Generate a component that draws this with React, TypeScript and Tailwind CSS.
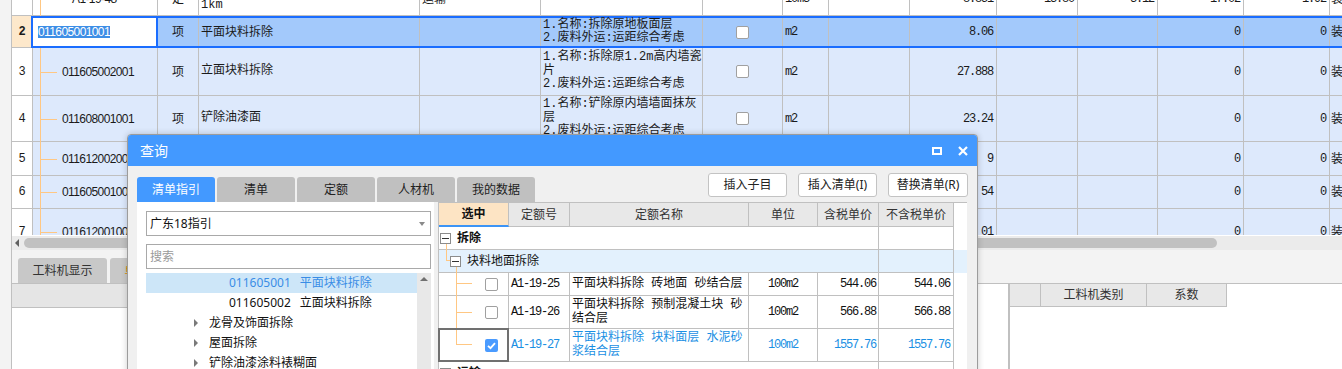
import type { ReactNode } from 'react';

const MONO = "font-['Liberation_Mono','Noto_Sans_CJK_SC',monospace]";
const UI = "font-['Noto_Sans','Noto_Sans_CJK_SC',sans-serif]";
const ARIAL = "font-['Liberation_Sans','Noto_Sans_CJK_SC',sans-serif]";
const LINE = 'bg-[#ffc783]';

// main grid column widths, each includes its right border
const W = [
  'w-[21px]', 'w-[125px]', 'w-[41px]', 'w-[221px]', 'w-[121px]', 'w-[162px]', 'w-[80px]',
  'w-[46px]', 'w-[81px]', 'w-[87px]', 'w-[81px]', 'w-[80px]', 'w-[86px]', 'w-[86px]', 'w-[100px]',
];

type Row = {
  no: string;
  code: string;
  indent: string;
  type: string;
  name: string[];
  c5?: string;
  feat: string[];
  check?: boolean;
  unit: string;
  qty: string;
  c11?: string;
  c12?: string;
  c13: string;
  c14: string;
  h: string;
  white?: boolean;
  branch?: boolean;
};

const rows: Row[] = [
  {
    no: '', code: 'A1-19-48', indent: 'pl-[39px]', type: '定', name: ['余泥渣土运输 运距', '1km'], c5: '运输',
    feat: [], unit: '10m3', qty: '8.851', c11: '13.80', c12: '3.12', c13: '17.02', c14: '1.92', h: 'h-[34px]', white: true,
  },
  {
    no: '3', code: '011605002001', indent: 'pl-[29px]', type: '项', name: ['立面块料拆除'], branch: true, check: true,
    feat: ['1.名称:拆除原1.2m高内墙瓷', '片', '2.废料外运:运距综合考虑'], unit: 'm2', qty: '27.888', c13: '0', c14: '0', h: 'h-[48px]',
  },
  {
    no: '4', code: '011608001001', indent: 'pl-[29px]', type: '项', name: ['铲除油漆面'], branch: true, check: true,
    feat: ['1.名称:铲除原内墙墙面抹灰', '层', '2.废料外运:运距综合考虑'], unit: 'm2', qty: '23.24', c13: '0', c14: '0', h: 'h-[46px]',
  },
  {
    no: '5', code: '011612002001', indent: 'pl-[29px]', type: '项', name: ['天棚面龙骨及饰面拆除'], branch: true, check: true,
    feat: ['1.名称:拆除原天棚', '2.废料外运:运距综合考虑'], unit: 'm2', qty: '9', c13: '0', c14: '0', h: 'h-[34px]',
  },
  {
    no: '6', code: '011605001002', indent: 'pl-[29px]', type: '项', name: ['平面块料拆除'], branch: true, check: true,
    feat: ['1.名称:拆除原踢脚线', '2.废料外运:运距综合考虑'], unit: 'm2', qty: '54', c13: '0', c14: '0', h: 'h-[33px]',
  },
  {
    no: '7', code: '011612001001', indent: 'pl-[29px]', type: '项', name: ['抹灰层拆除'], branch: true, check: true,
    feat: ['1.名称:铲除原天棚抹灰', '层', '2.废料外运:运距综合考虑'], unit: 'm2', qty: '01', c13: '0', c14: '0', h: 'h-[46px]',
  },
];

function Cell({ w, bottom = true, className = '', children }: { w: string; bottom?: boolean; className?: string; children?: ReactNode }) {
  return (
    <div className={`${w} h-full shrink-0 flex whitespace-nowrap border-r border-[#c0c0c0] ${bottom ? 'border-b' : ''} ${className}`}>
      {children}
    </div>
  );
}

function Box({ checked = false }: { checked?: boolean }) {
  if (checked) {
    return (
      <span className="w-[13px] h-[13px] shrink-0 rounded-[2px] bg-[#4a9bff] flex items-center justify-center">
        <svg width="11" height="11" viewBox="0 0 11 11">
          <path d="M2 5.8L4.5 8.2L9 3.2" fill="none" stroke="white" strokeWidth="1.8" />
        </svg>
      </span>
    );
  }
  return <span className="w-[13px] h-[13px] shrink-0 rounded-[2px] bg-white border border-[#a0a0a0]" />;
}

function GridRow({ r }: { r: Row }) {
  const bg = r.white ? 'bg-white' : 'bg-[#dde9fc]';
  const num = `items-center justify-end pr-[3px] ${MONO} text-[12px] tracking-[-1.2px] ${bg}`;
  return (
    <div className={`flex w-max ${r.h}`}>
      <Cell w={W[0]} className={`items-center justify-center bg-white ${MONO} text-[12px]`}>{r.no}</Cell>
      <Cell w={W[1]} className={`relative items-center ${bg}`}>
        <span className={`absolute left-[7px] top-0 bottom-[-1px] w-px ${LINE}`} />
        {r.branch && <span className={`absolute left-[8px] top-1/2 w-[16px] h-px ${LINE}`} />}
        <span className={`${r.indent} ${ARIAL} text-[12px] tracking-[-0.6px]`}>{r.code}</span>
      </Cell>
      <Cell w={W[2]} className={`items-center justify-center text-[12px] ${bg}`}>{r.type}</Cell>
      <Cell w={W[3]} className={`flex-col justify-center pl-[2px] text-[12px] leading-[13.5px] ${MONO} ${bg}`}>
        {r.name.map((l) => <div key={l}>{l}</div>)}
      </Cell>
      <Cell w={W[4]} className={`items-center pl-[2px] text-[12px] ${bg}`}>{r.c5}</Cell>
      <Cell w={W[5]} className={`flex-col justify-center pl-[2px] text-[12px] leading-[13.5px] ${MONO} ${bg}`}>
        {r.feat.map((l) => <div key={l}>{l}</div>)}
      </Cell>
      <Cell w={W[6]} className={`items-center justify-center ${bg}`}>{r.check && <Box />}</Cell>
      <Cell w={W[7]} className={`items-center pl-[2px] ${MONO} text-[12px] tracking-[-1.2px] ${bg}`}>{r.unit}</Cell>
      <Cell w={W[8]} className={bg} />
      <Cell w={W[9]} className={num}>{r.qty}</Cell>
      <Cell w={W[10]} className={num}>{r.c11}</Cell>
      <Cell w={W[11]} className={num}>{r.c12}</Cell>
      <Cell w={W[12]} className={num}>{r.c13}</Cell>
      <Cell w={W[13]} className={num}>{r.c14}</Cell>
      <Cell w={W[14]} className={`items-center pl-[1px] overflow-hidden text-[12px] ${bg}`}>装饰工程</Cell>
    </div>
  );
}

function SelectedRow() {
  const num = `items-center justify-end pr-[3px] ${MONO} text-[12px] tracking-[-1.2px]`;
  return (
    <div className="flex w-max h-[32px]">
      <Cell w={W[0]} className={`items-center justify-center bg-[#fde8cb] font-bold ${MONO} text-[12px]`}>2</Cell>
      <div className="-ml-[2px] flex h-full border-y-2 border-[#1a6dff] bg-[#a3c9fb]">
        <div className="w-[127px] h-full shrink-0 bg-white border-x-2 border-[#1a6dff] pl-[5px]">
          <span className={`inline-block h-[12px] leading-[12px] bg-[#3d8ee6] text-white ${ARIAL} text-[12px] tracking-[-0.6px]`}>011605001001</span>
        </div>
        <Cell w={W[2]} bottom={false} className="items-center justify-center text-[12px]">项</Cell>
        <Cell w={W[3]} bottom={false} className="items-center pl-[2px] text-[12px]">平面块料拆除</Cell>
        <Cell w={W[4]} bottom={false} />
        <Cell w={W[5]} bottom={false} className={`flex-col justify-center pl-[2px] text-[12px] leading-[13.5px] ${MONO}`}>
          <div>1.名称:拆除原地板面层</div>
          <div>2.废料外运:运距综合考虑</div>
        </Cell>
        <Cell w={W[6]} bottom={false} className="items-center justify-center"><Box /></Cell>
        <Cell w={W[7]} bottom={false} className={`items-center pl-[2px] ${MONO} text-[12px] tracking-[-1.2px]`}>m2</Cell>
        <Cell w={W[8]} bottom={false} />
        <Cell w={W[9]} bottom={false} className={num}>8.06</Cell>
        <Cell w={W[10]} bottom={false} />
        <Cell w={W[11]} bottom={false} />
        <Cell w={W[12]} bottom={false} className={num}>0</Cell>
        <Cell w={W[13]} bottom={false} className={num}>0</Cell>
        <Cell w={W[14]} bottom={false} className="items-center pl-[1px] overflow-hidden text-[12px]">装饰工程</Cell>
      </div>
    </div>
  );
}

function Minus({ className = '' }: { className?: string }) {
  return (
    <span className={`relative z-10 w-[11px] h-[11px] shrink-0 border border-[#8c8c8c] bg-white flex items-center justify-center ${className}`}>
      <span className="w-[7px] h-px bg-[#333]" />
    </span>
  );
}

const TW = ['w-[70px]', 'w-[61px]', 'w-[179px]', 'w-[69px]', 'w-[61px]', 'w-[75px]'];
const cellB = 'h-full shrink-0 flex border-r border-b border-[#c0c0c0] whitespace-nowrap';

const quotas = [
  { code: 'A1-19-25', name: ['平面块料拆除 砖地面 砂结合层'], price: '544.06', h: 'h-[23px]', line: 'top-[10px]', last: false, sel: false },
  { code: 'A1-19-26', name: ['平面块料拆除 预制混凝土块 砂', '结合层'], price: '566.88', h: 'h-[33px]', line: 'top-[16px]', last: false, sel: false },
  { code: 'A1-19-27', name: ['平面块料拆除 块料面层 水泥砂', '浆结合层'], price: '1557.76', h: 'h-[33px]', line: 'top-[15px]', last: true, sel: true },
];

function QuotaTable() {
  const mono = `${MONO} tracking-[-1.2px]`;
  return (
    <div className="w-[529px] shrink-0 bg-white border-l border-t border-[#c0c0c0] text-[12px] text-[#111]">
      <div className="flex h-[24px]">
        <div className={`${TW[0]} h-full shrink-0 flex items-center justify-center border-r border-[#c0c0c0] border-b-2 border-b-[#3d94f5] bg-[#fde4c4] font-bold`}>选中</div>
        {['定额号', '定额名称', '单位', '含税单价', '不含税单价'].map((t, i) => (
          <div key={t} className={`${TW[i + 1]} ${cellB} items-center justify-center bg-[#e8e8e8] text-[#333]`}>{t}</div>
        ))}
      </div>

      <div className="flex h-[23px]">
        <div className={`w-[440px] ${cellB} relative items-center`}>
          <span className={`absolute left-[7px] top-[16px] bottom-[-1px] w-px ${LINE}`} />
          <Minus className="ml-[1px]" />
          <span className="ml-[6px] font-bold">拆除</span>
        </div>
        <div className={`${TW[5]} ${cellB}`} />
      </div>

      <div className="flex h-[23px] bg-[#e3f1fd]">
        <div className={`w-[440px] ${cellB} relative items-center`}>
          <span className={`absolute left-[7px] top-[-1px] h-[11px] w-px ${LINE}`} />
          <span className={`absolute left-[7px] top-[10px] w-[4px] h-px ${LINE}`} />
          <span className={`absolute left-[17px] top-[16px] bottom-[-1px] w-px ${LINE}`} />
          <Minus className="ml-[11px]" />
          <span className="ml-[6px]">块料地面拆除</span>
        </div>
        <div className={`${TW[5]} ${cellB}`} />
      </div>

      {quotas.map((q) => (
        <div key={q.code} className={`flex ${q.h} ${q.sel ? 'text-[#1a8fe3]' : ''}`}>
          <div className={`${TW[0]} ${cellB} relative items-center pl-[46px]`}>
            <span className={`absolute left-[17px] top-[-1px] w-px ${LINE} ${q.last ? 'h-[16px]' : 'bottom-[-1px]'}`} />
            <span className={`absolute left-[17px] ${q.line} w-[16px] h-px ${LINE}`} />
            <Box checked={q.sel} />
            {q.sel && <span className="absolute left-[-1px] top-[-1px] w-[71px] h-[34px] border-2 border-[#707070]" />}
          </div>
          <div className={`${TW[1]} ${cellB} items-center pl-[2px] ${mono}`}>{q.code}</div>
          <div className={`${TW[2]} ${cellB} flex-col justify-center pl-[2px] leading-[14px] ${MONO}`}>
            {q.name.map((l) => <div key={l}>{l}</div>)}
          </div>
          <div className={`${TW[3]} ${cellB} items-center justify-center ${mono}`}>100m2</div>
          <div className={`${TW[4]} ${cellB} items-center justify-end pr-[2px] ${mono}`}>{q.price}</div>
          <div className={`${TW[5]} ${cellB} items-center justify-end pr-[3px] ${mono}`}>{q.price}</div>
        </div>
      ))}

      <div className="flex h-[23px]">
        <div className={`w-[440px] ${cellB} items-center`}>
          <Minus className="ml-[1px]" />
          <span className="ml-[6px] font-bold">运输</span>
        </div>
        <div className={`${TW[5]} ${cellB}`} />
      </div>
    </div>
  );
}

function GuidePanel() {
  const folders = ['龙骨及饰面拆除', '屋面拆除', '铲除油漆涂料裱糊面'];
  return (
    <div className="w-[297px] shrink-0 bg-white pt-[9px] pl-[9px] text-[12px] text-[#111]">
      <div className="w-[285px] h-[25px] border border-[#a9a9a9] flex items-center pl-[3px] pr-[5px]">
        <span>广东18指引</span>
        <span className="ml-auto w-0 h-0 border-x-[3px] border-x-transparent border-t-[4px] border-t-[#8a8a8a]" />
      </div>
      <div className="mt-[8px] w-[285px] h-[25px] border border-[#a9a9a9] flex items-center pl-[3px] text-[#9a9a9a]">搜索</div>
      <div className="mt-[4px] flex">
        <div className="w-[271px]">
          <div className="h-[20px] flex items-center pl-[83px] bg-[#cde6f8] text-[#3a8de6]">
            <span>011605001</span>
            <span className="ml-[9px]">平面块料拆除</span>
          </div>
          <div className="h-[20px] flex items-center pl-[83px]">
            <span>011605002</span>
            <span className="ml-[9px]">立面块料拆除</span>
          </div>
          {folders.map((f) => (
            <div key={f} className="h-[20px] flex items-center pl-[48px]">
              <span className="w-0 h-0 border-y-[4px] border-y-transparent border-l-[4px] border-l-[#7a7a7a]" />
              <span className="ml-[11px]">{f}</span>
            </div>
          ))}
        </div>
        <div className="w-[14px] h-[110px] bg-[#e8e8e8] flex justify-center pt-[4px]">
          <span className="w-0 h-0 border-x-[4px] border-x-transparent border-b-[4px] border-b-[#707070]" />
        </div>
      </div>
    </div>
  );
}

function QueryDialog() {
  const tabs = ['清单指引', '清单', '定额', '人材机', '我的数据'];
  const buttons = [
    { t: '插入子目', w: 'w-[79px]' },
    { t: '插入清单(I)', w: 'w-[79px]' },
    { t: '替换清单(R)', w: 'w-[80px]' },
  ];
  return (
    <div className={`absolute left-[127px] top-[134px] w-[851px] h-[250px] flex flex-col overflow-hidden rounded-t-[4px] border border-[#9c9c9c] bg-[#f0f0f0] shadow-[0_0_6px_rgba(0,0,0,0.2)] ${UI}`}>
      <div className="h-[31px] shrink-0 flex items-center bg-[#4399ff] pl-[12px] pr-[9px] text-white text-[14px]">
        <span>查询</span>
        <div className="ml-auto flex items-center gap-[16px]">
          <span className="w-[10px] h-[8px] border-2 border-white" />
          <svg width="10" height="10" viewBox="0 0 10 10">
            <path d="M1 1L9 9M9 1L1 9" stroke="white" strokeWidth="2.2" />
          </svg>
        </div>
      </div>

      <div className="flex items-end shrink-0 pt-[7px] px-[9px]">
        <div className="flex gap-[2px]">
          {tabs.map((t, i) => (
            <div
              key={t}
              className={`w-[78px] h-[25px] flex items-center justify-center rounded-t-[3px] text-[12px] ${i === 0 ? 'bg-[#4399ff] text-white' : 'bg-[#c0c0c0] text-[#222]'}`}
            >
              {t}
            </div>
          ))}
        </div>
        <div className="ml-auto mb-[5px] flex gap-[11px]">
          {buttons.map((b) => (
            <div key={b.t} className={`${b.w} h-[24px] flex items-center justify-center rounded-[3px] border border-[#c3c3c3] bg-white text-[12px] text-[#222]`}>
              {b.t}
            </div>
          ))}
        </div>
      </div>

      <div className="flex flex-1 min-h-0 gap-[4px] pl-[9px] pr-[10px]">
        <GuidePanel />
        <QuotaTable />
      </div>
    </div>
  );
}

export default function App() {
  return (
    <div className={`relative flex w-[1342px] h-[369px] overflow-hidden bg-white text-[#1a1a1a] ${UI}`}>
      <div className="w-[11px] shrink-0 bg-[#f3f3f3]" />
      <div className="flex flex-col flex-1 min-w-0 border-l border-[#c0c0c0]">
        {/* main bill grid */}
        <div className="h-[235px] shrink-0 overflow-hidden bg-white">
          <div className="-mt-[18px]">
            <GridRow r={rows[0]} />
            <SelectedRow />
            {rows.slice(1).map((r) => <GridRow key={r.no} r={r} />)}
          </div>
        </div>

        {/* horizontal scrollbar */}
        <div className="h-[15px] shrink-0 flex items-center border-t border-white bg-[#ebebeb]">
          <span className="ml-[3px] w-0 h-0 border-y-[4px] border-y-transparent border-r-[4px] border-r-[#606060]" />
          <span className="ml-[5px] w-[1193px] h-[10px] rounded-full bg-[#c1c1c1]" />
        </div>

        {/* bottom detail panel */}
        <div className="flex flex-col flex-1 min-h-0">
          <div className="h-[34px] shrink-0 flex items-end gap-[3px] pl-[6px] bg-[#f3f3f3] border-b border-[#c0c0c0]">
            <div className="w-[89px] h-[25px] flex items-center justify-center rounded-t-[3px] bg-[#c8c8c8] text-[12px] text-[#333]">工料机显示</div>
            <div className="w-[77px] h-[25px] flex items-center justify-center rounded-t-[3px] bg-[#c8c8c8] text-[12px] text-[#e08a00]">单价构成</div>
          </div>
          <div className="flex flex-1">
            <div className="flex-1 bg-white">
              <div className="w-[940px] h-[24px] bg-[#e5e5e5] border-b border-[#c0c0c0]" />
            </div>
            <div className="w-[334px] shrink-0 border-l-2 border-[#c0c0c0] bg-white">
              <div className="flex h-[23px] text-[12px] text-[#333]">
                <div className="w-[31px] h-full border-r border-b border-[#c0c0c0] bg-[#e8e8e8]" />
                <div className="w-[106px] h-full flex items-center justify-center border-r border-b border-[#c0c0c0] bg-[#e8e8e8]">工料机类别</div>
                <div className="w-[80px] h-full flex items-center justify-center border-r border-b border-[#c0c0c0] bg-[#e8e8e8]">系数</div>
              </div>
            </div>
          </div>
        </div>
      </div>
      <QueryDialog />
    </div>
  );
}
